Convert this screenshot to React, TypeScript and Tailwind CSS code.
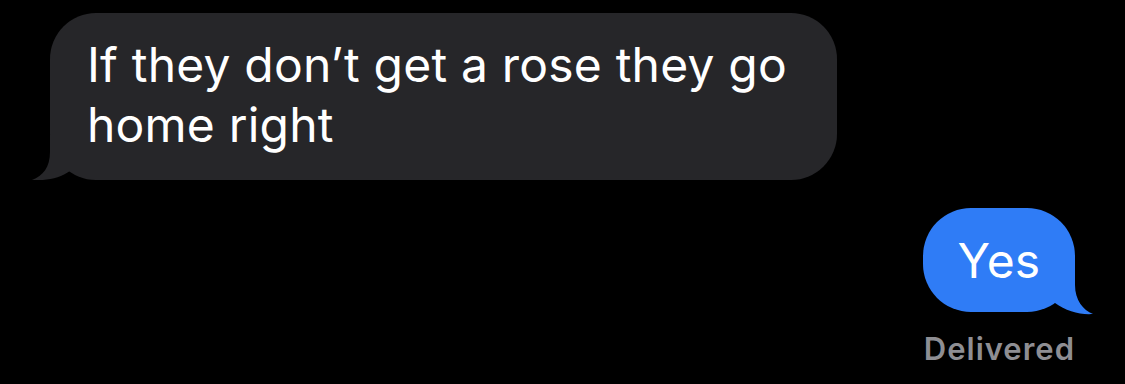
export default function App() {
  return (
    <div className="w-[1125px] h-[384px] bg-black overflow-hidden flex flex-col font-['Inter',sans-serif] antialiased">
      {/* incoming */}
      <div className="relative mt-[13px] ml-[50px] w-[787px] h-[167px] rounded-[46px] bg-[#262629] pl-[37px] pt-[22px] text-white text-[48px] leading-[60px] tracking-[0.2px]">
        <p>If they don’t get a rose they go home right</p>
        <svg
          className="absolute left-[-20px] bottom-0"
          width="42"
          height="50"
          viewBox="0 0 42 50"
        >
          <path
            d="M20 5 L20 22 C20 37 13 46 2 50 C17 51 30 48 40 41 L40 5 Z"
            fill="#262629"
          />
        </svg>
      </div>

      {/* outgoing */}
      <div className="flex flex-col items-end pr-[50px] mt-[28px]">
        <div className="relative h-[104px] w-[152px] rounded-[48px] bg-[#2f7cf6] flex items-center justify-center text-white text-[48px] leading-[60px] tracking-[0.2px]">
          <span className="pt-[2px]">Yes</span>
          <svg
            className="absolute right-[-20px] bottom-[-4px]"
            width="45"
            height="56"
            viewBox="0 0 45 56"
          >
            <path
              d="M25 2 L25 25 C25 40 33 50 43 54 C30 55 16 51 5 43 L5 2 Z"
              fill="#2f7cf6"
            />
          </svg>
        </div>
        <div className="mt-[19px] text-[31px] leading-[36px] font-semibold tracking-[1px] text-[#8e8e93]">
          Delivered
        </div>
      </div>
    </div>
  );
}
